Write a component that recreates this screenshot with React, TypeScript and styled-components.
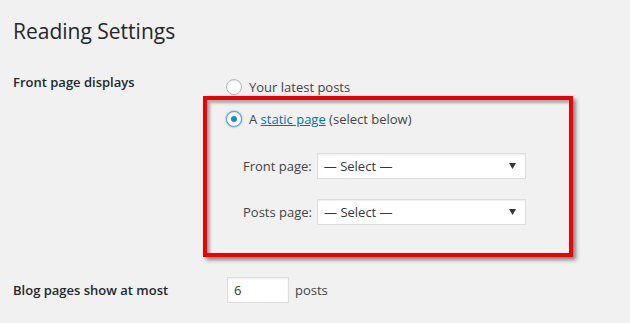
import React from 'react';
import styled, { createGlobalStyle } from 'styled-components';

// Base page reset: grey WordPress admin background
const GlobalStyle = createGlobalStyle`
  html, body {
    margin: 0;
    padding: 0;
    background: #f1f1f1;
  }
  body {
    font-family: "Open Sans", "Noto Sans", sans-serif;
    font-size: 13px;
    color: #444;
  }
`;

const Page = styled.div`
  padding: 0 13px;
`;

const Title = styled.h1`
  margin: 17px 0 0;
  font-size: 21px;
  line-height: 29px;
  font-weight: 400;
  color: #23282d;
`;

// One settings row: label column + field column
const Row = styled.div<{ $top: number; $center?: boolean }>`
  display: flex;
  align-items: ${(p) => (p.$center ? 'center' : 'flex-start')};
  margin-top: ${(p) => p.$top}px;
`;

const Label = styled.div`
  width: 213px;
  flex: none;
  line-height: 20px;
  font-weight: 600;
  color: #23282d;
`;

const Field = styled.div<{ $pad?: number }>`
  display: flex;
  flex-direction: column;
  padding-top: ${(p) => p.$pad ?? 0}px;
`;

const RadioLine = styled.label`
  display: flex;
  align-items: center;
  gap: 7px;
  line-height: 20px;
  color: #444;
`;

const Radio = styled.span<{ $checked?: boolean }>`
  width: 14px;
  height: 14px;
  border-radius: 50%;
  background: #fff;
  border: 1px solid ${(p) => (p.$checked ? '#5b9dd9' : '#b4b9be')};
  box-shadow: inset 0 1px 2px rgba(0, 0, 0, 0.1)
    ${(p) => (p.$checked ? ', 0 0 2px rgba(30, 140, 190, 0.8)' : '')};
  display: flex;
  align-items: center;
  justify-content: center;

  &::after {
    content: '';
    display: ${(p) => (p.$checked ? 'block' : 'none')};
    width: 6px;
    height: 6px;
    border-radius: 50%;
    background: #1e8cbe;
  }
`;

const Link = styled.a`
  color: #0073aa;
  text-decoration: underline;
`;

// Red annotation frame drawn over the screenshot
const Highlight = styled.div`
  width: 343px;
  margin: -1px 0 0 -23px;
  padding: 9px 0 28px 19px;
  border: 4px solid #f00000;
  box-shadow: 3px 3px 4px rgba(0, 0, 0, 0.45),
    inset 3px 3px 3px rgba(0, 0, 0, 0.3);
`;

const SelectRow = styled.div<{ $top: number }>`
  display: flex;
  align-items: center;
  gap: 5px;
  margin: ${(p) => p.$top}px 0 0 17px;
`;

const SelectBox = styled.div`
  width: 192px;
  height: 24px;
  display: flex;
  align-items: center;
  justify-content: space-between;
  padding: 0 9px 0 6px;
  box-sizing: content-box;
  background: #fff;
  border: 1px solid #ddd;
  box-shadow: inset 0 1px 2px rgba(0, 0, 0, 0.07);
  color: #32373c;
`;

const NumberInput = styled.div`
  width: 54px;
  height: 24px;
  margin-left: 1px;
  padding-left: 6px;
  display: flex;
  align-items: center;
  background: #fff;
  border: 1px solid #ddd;
  box-shadow: inset 0 1px 2px rgba(0, 0, 0, 0.07);
  color: #32373c;
`;

const Suffix = styled.span`
  margin-left: 6px;
`;

const Arrow = () => (
  <svg width="7" height="6" viewBox="0 0 7 6">
    <path d="M0 0h7L3.5 6z" fill="#32373c" />
  </svg>
);

const PageSelect: React.FC<{ label: string; top: number }> = ({ label, top }) => (
  <SelectRow $top={top}>
    <span>{label}</span>
    <SelectBox>
      <span>— Select —</span>
      <Arrow />
    </SelectBox>
  </SelectRow>
);

const App: React.FC = () => (
  <>
    <GlobalStyle />
    <Page>
      <Title>Reading Settings</Title>

      <Row $top={26}>
        <Label>Front page displays</Label>
        <Field $pad={5}>
          <RadioLine>
            <Radio />
            Your latest posts
          </RadioLine>
          <Highlight>
            <RadioLine>
              <Radio $checked />
              <span>
                A <Link href="#">static page</Link> (select below)
              </span>
            </RadioLine>
            <PageSelect label="Front page:" top={24} />
            <PageSelect label="Posts page:" top={20} />
          </Highlight>
        </Field>
      </Row>

      <Row $top={20} $center>
        <Label>Blog pages show at most</Label>
        <NumberInput>6</NumberInput>
        <Suffix>posts</Suffix>
      </Row>
    </Page>
  </>
);

export default App;
